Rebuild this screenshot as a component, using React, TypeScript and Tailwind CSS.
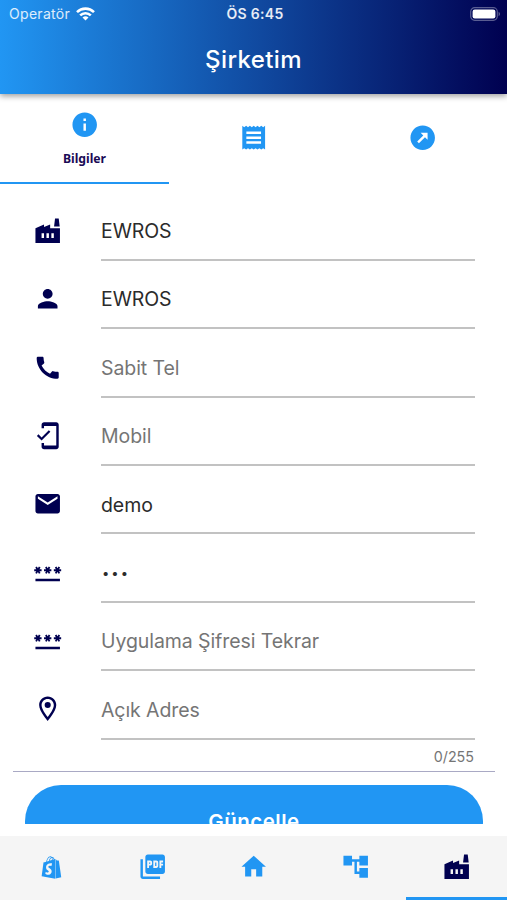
import * as React from "react";
import { FaShopify } from "react-icons/fa";
import {
  MdAccountTree,
  MdCall,
  MdEmail,
  MdFactory,
  MdHome,
  MdInfo,
  MdMobileFriendly,
  MdOutbound,
  MdPassword,
  MdPerson,
  MdPictureAsPdf,
} from "react-icons/md";

type IconComponent = React.ComponentType<{ size?: number }>;
type Field = { icon: IconComponent; text: string; filled?: boolean; secret?: boolean };

function PlaceIcon({ size = 24 }: { size?: number }) {
  return (
    <svg viewBox="0 0 24 24" width={size} height={size} fill="currentColor">
      <path d="M12 2C8.13 2 5 5.13 5 9c0 5.25 7 13 7 13s7-7.75 7-13c0-3.87-3.13-7-7-7zM7 9c0-2.76 2.24-5 5-5s5 2.24 5 5c0 2.88-2.88 7.19-5 9.88C9.92 16.21 7 11.85 7 9z" />
      <circle cx="12" cy="9" r="2.5" />
    </svg>
  );
}

function ReceiptIcon({ size = 24 }: { size?: number }) {
  return (
    <svg viewBox="0 0 24 24" width={size} height={size} fill="currentColor" fillRule="evenodd">
      <path d="M2.700 2.300l1.550 1.100 1.550-1.100 1.550 1.100 1.550-1.100 1.550 1.100 1.550-1.100 1.550 1.100 1.550-1.100 1.550 1.100 1.550-1.100 1.550 1.100 1.550-1.100v19.400l-1.550-1.100-1.550 1.100-1.550-1.100-1.550 1.100-1.550-1.100-1.550 1.100-1.550-1.100-1.550 1.100-1.550-1.100-1.550 1.100-1.550-1.100-1.550 1.100zM6 7v2h12V7zM6 11v2h12v-2zM6 15v2h12v-2z" />
    </svg>
  );
}

const FIELDS: Field[] = [
  { icon: MdFactory, text: "EWROS", filled: true },
  { icon: MdPerson, text: "EWROS", filled: true },
  { icon: MdCall, text: "Sabit Tel" },
  { icon: MdMobileFriendly, text: "Mobil" },
  { icon: MdEmail, text: "demo", filled: true },
  { icon: MdPassword, text: "•••", filled: true, secret: true },
  { icon: MdPassword, text: "Uygulama Şifresi Tekrar" },
  { icon: PlaceIcon, text: "Açık Adres" },
];

const NAV: { id: string; icon: IconComponent; size: number }[] = [
  { id: "shop", icon: FaShopify, size: 23 },
  { id: "pdf", icon: MdPictureAsPdf, size: 29.4 },
  { id: "home", icon: MdHome, size: 29.4 },
  { id: "tree", icon: MdAccountTree, size: 29.4 },
  { id: "company", icon: MdFactory, size: 29.4 },
];

function StatusBar() {
  return (
    <div className="grid h-[27px] grid-cols-3 items-center pl-[9px] pr-[6px] text-[14px] leading-none">
      <div className="flex items-center gap-[6px] text-white/85">
        <span className="tracking-[0.3px]">Operatör</span>
        <svg viewBox="0 0 19 14" className="h-[14px] w-[19px]" fill="none" stroke="white" strokeWidth="2.6">
          <path d="M1 5.1a12.2 12.2 0 0 1 17 0" />
          <path d="M4.2 8.4a7.6 7.6 0 0 1 10.6 0" />
          <path d="M9.5 13.6 6.5 10.6a4.3 4.3 0 0 1 6 0z" fill="white" stroke="none" />
        </svg>
      </div>
      <span className="text-center font-semibold tracking-[0.3px] text-white/90">ÖS 6:45</span>
      <svg viewBox="0 0 31 14" className="h-[14px] w-[31px] justify-self-end">
        <rect x="0.7" y="0.7" width="26.6" height="12.6" rx="4" fill="none" stroke="white" strokeOpacity="0.35" strokeWidth="1.2" />
        <rect x="2.6" y="2.6" width="22.8" height="8.8" rx="2.2" fill="white" />
        <path d="M28.6 4.8c1.8.7 1.8 3.7 0 4.4z" fill="white" fillOpacity="0.4" />
      </svg>
    </div>
  );
}

function FieldRow({ icon: Icon, text, filled, secret }: Field) {
  return (
    <div className="flex h-[68.4px] shrink-0 pl-[32.5px] pr-8">
      <div className="flex w-[68.5px] items-center pt-[7.5px]">
        <Icon size={29.4} />
      </div>
      <div
        className={`flex flex-1 items-center border-b-2 border-[#c2c2c2] pt-[12px] text-[19.5px] ${
          filled ? "text-[#2b2b2b]" : "text-[#757575]"
        }`}
      >
        <span className={secret ? "pl-px text-[13px] tracking-[2px]" : "tracking-[-0.08px]"}>{text}</span>
      </div>
    </div>
  );
}

export default function App() {
  return (
    <div className="flex h-[900px] w-[507px] flex-col overflow-hidden bg-white font-['Inter','Liberation_Sans',sans-serif] text-[#000050]">
      <header className="relative z-10 h-[94px] shrink-0 bg-[linear-gradient(to_right,#2196f3,#000050)] text-white shadow-[0_2px_6px_rgba(0,0,0,0.4)]">
        <StatusBar />
        <h1 className="flex h-[66px] items-center justify-center text-[24px] font-medium tracking-[0.4px]">Şirketim</h1>
      </header>

      <div className="grid h-[90px] shrink-0 grid-cols-3 text-[#2196f3]">
        <div className="flex flex-col items-center border-b-[2.5px] border-[#2196f3] pt-[15.5px]">
          <MdInfo size={29.4} />
          <span className="mt-[12.5px] font-['Noto_Sans',sans-serif] text-[12.2px] font-bold leading-4 text-[#1a0a55]">
            Bilgiler
          </span>
        </div>
        <div className="flex items-center justify-center pb-[3px]">
          <ReceiptIcon size={29.4} />
        </div>
        <div className="flex items-center justify-center pb-[3px]">
          <MdOutbound size={29.4} />
        </div>
      </div>

      <main className="flex h-[640px] shrink-0 flex-col overflow-hidden pt-[8.5px]">
        {FIELDS.map((field, i) => (
          <FieldRow key={i} {...field} />
        ))}
        <div className="ml-[13px] mr-[12px] h-[32.5px] shrink-0 border-b border-[#a9a9c4] pr-[21px] pt-[7.5px] text-right text-[14.3px] leading-[20px] text-[#757575]">
          0/255
        </div>
        <div className="ml-[25px] mr-6 mt-[12.5px] flex h-[73px] shrink-0 items-center justify-center rounded-[36px] bg-[#2196f3] pt-[2px] text-[20.5px] font-semibold tracking-[0.5px] text-white">
          Güncelle
        </div>
      </main>

      <nav className="mt-[12px] grid h-[64px] shrink-0 grid-cols-5 bg-[#f5f5f5]">
        {NAV.map(({ id, icon: Icon, size }) => (
          <div
            key={id}
            className={`flex items-center justify-center border-b-[3px] pl-px pt-px ${
              id === "company" ? "border-[#2196f3] text-[#000050]" : "border-transparent text-[#2196f3]"
            }`}
          >
            <Icon size={size} />
          </div>
        ))}
      </nav>
    </div>
  );
}
